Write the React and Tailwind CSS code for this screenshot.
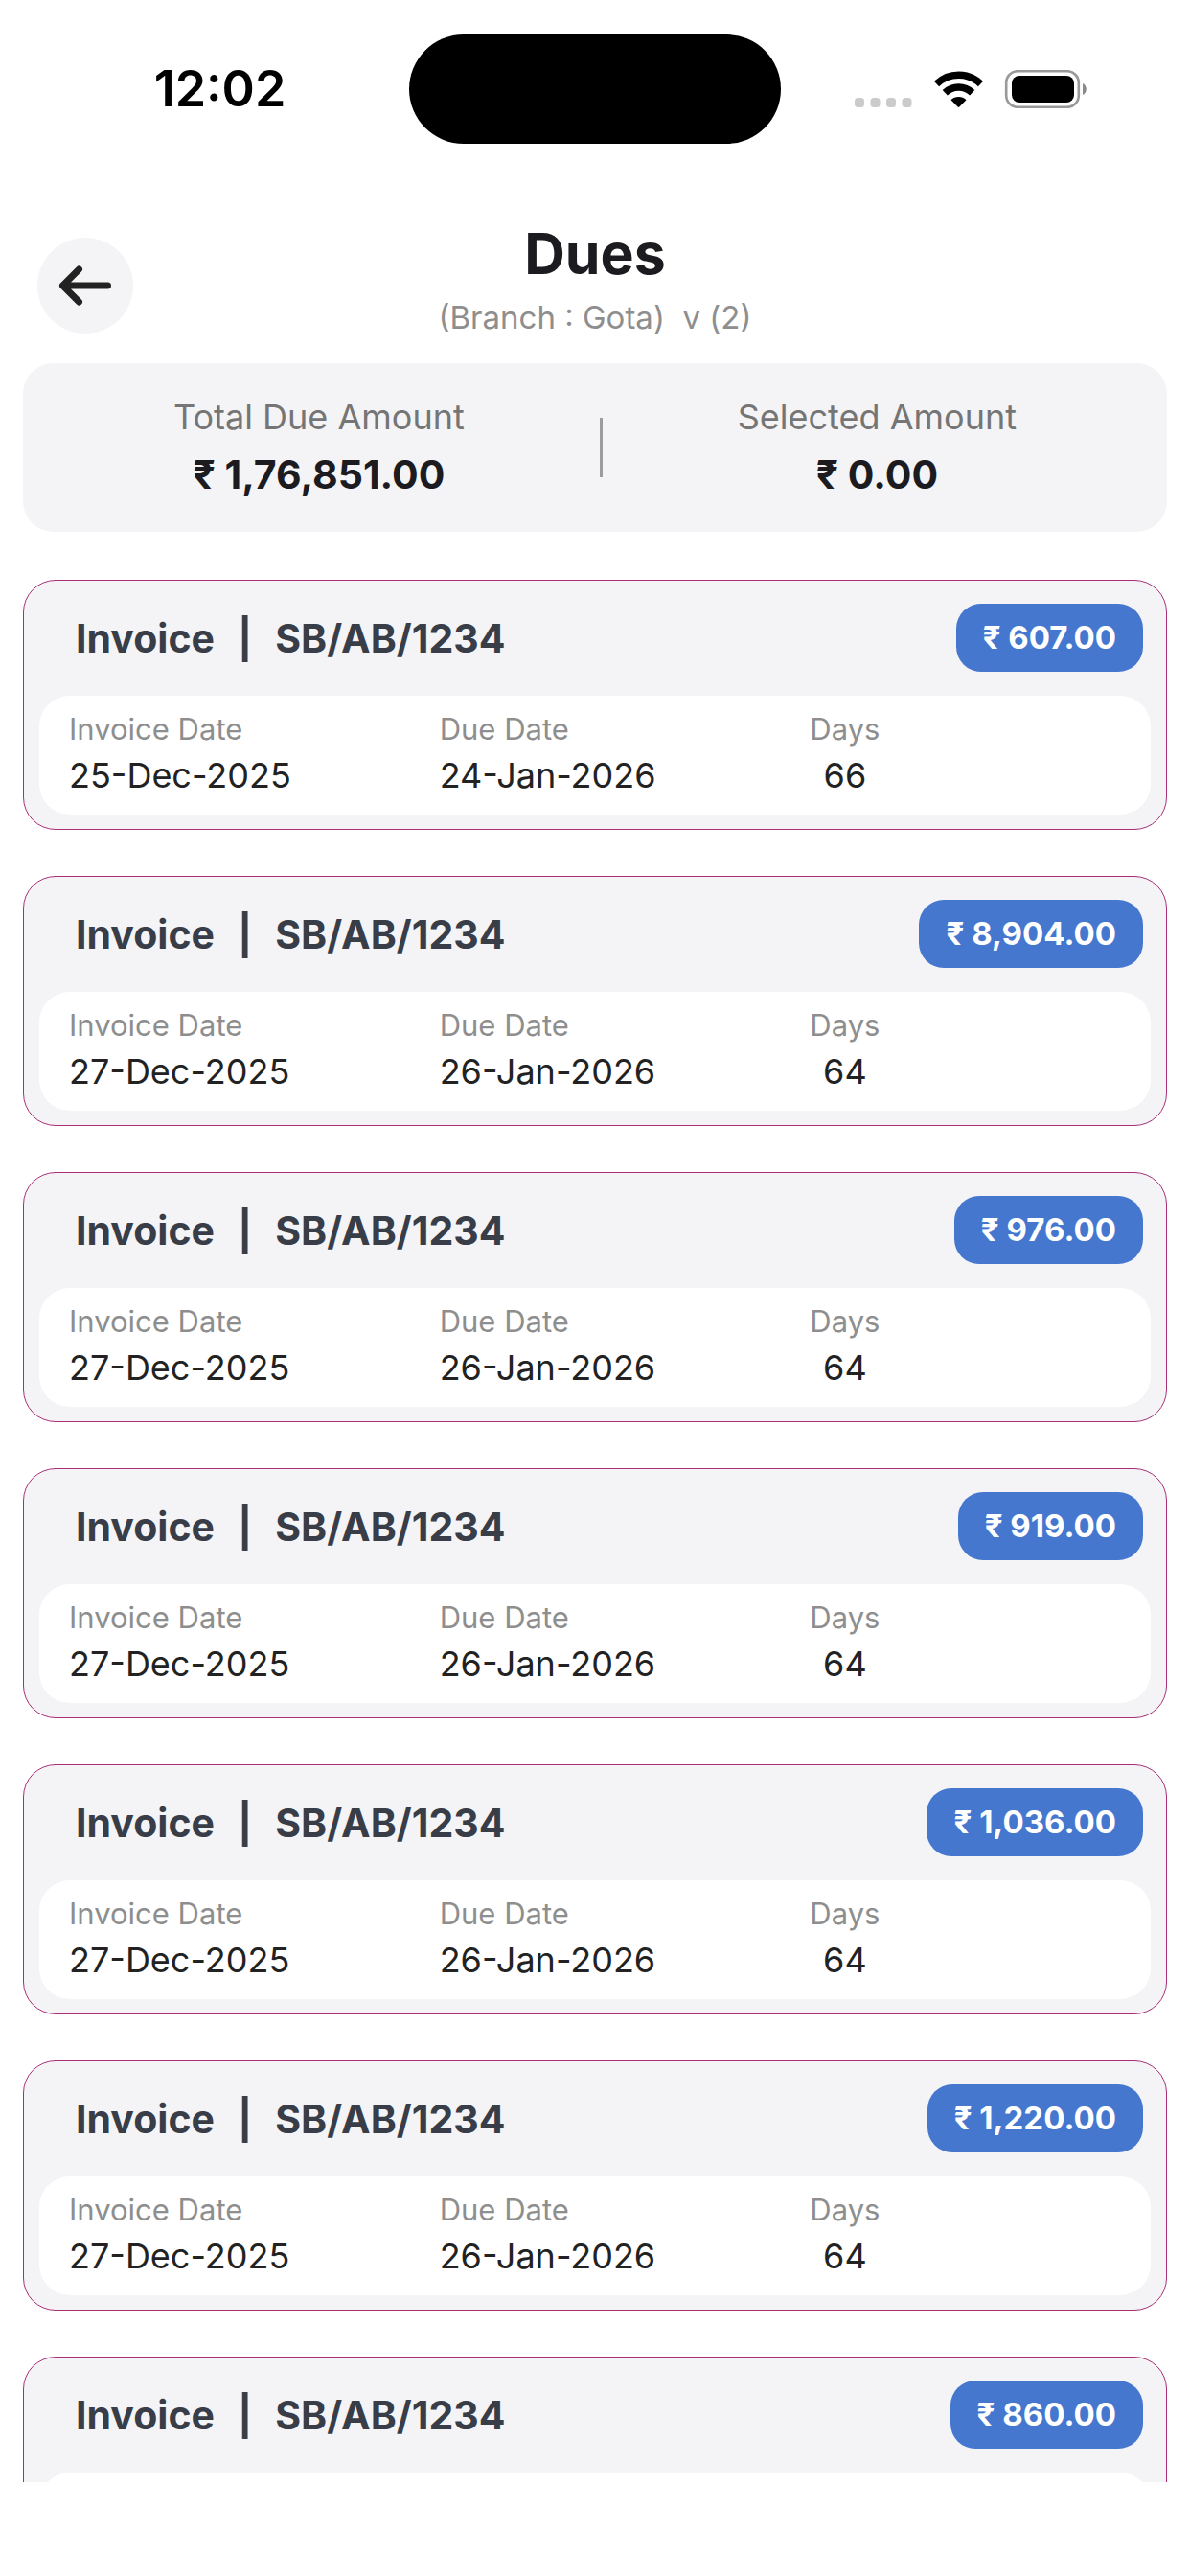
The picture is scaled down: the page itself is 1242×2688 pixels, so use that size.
import React from "react";

const invoices = [
  { id: 1, number: "SB/AB/1234", amount: "607.00", date: "25-Dec-2025", due: "24-Jan-2026", days: 66 },
  { id: 2, number: "SB/AB/1234", amount: "8,904.00", date: "27-Dec-2025", due: "26-Jan-2026", days: 64 },
  { id: 3, number: "SB/AB/1234", amount: "976.00", date: "27-Dec-2025", due: "26-Jan-2026", days: 64 },
  { id: 4, number: "SB/AB/1234", amount: "919.00", date: "27-Dec-2025", due: "26-Jan-2026", days: 64 },
  { id: 5, number: "SB/AB/1234", amount: "1,036.00", date: "27-Dec-2025", due: "26-Jan-2026", days: 64 },
  { id: 6, number: "SB/AB/1234", amount: "1,220.00", date: "27-Dec-2025", due: "26-Jan-2026", days: 64 },
  { id: 7, number: "SB/AB/1234", amount: "860.00", date: "27-Dec-2025", due: "26-Jan-2026", days: 64 },
];

const StatusBar = () => (
  <div className="grid h-[186px] shrink-0 grid-cols-[1fr_388px_1fr] items-center">
    <span className="pl-8 text-center text-[52px] leading-[66px] font-semibold text-black">
      12:02
    </span>
    <div className="h-[114px] rounded-full bg-black" />
    <div className="flex justify-center pr-8">
      <svg width="244" height="40" viewBox="0 0 244 40" aria-hidden="true">
        <g fill="#cbcbcb">
          <rect x="1" y="29" width="10" height="10" rx="3.5" />
          <rect x="17.5" y="29" width="10" height="10" rx="3.5" />
          <rect x="34" y="29" width="10" height="10" rx="3.5" />
          <rect x="50.5" y="29" width="10" height="10" rx="3.5" />
        </g>
        <g fill="none" stroke="#000" strokeWidth="7.5">
          <path d="M86.5 14.5a33 33 0 0 1 46 0" />
          <path d="M95.3 23.7a20.5 20.5 0 0 1 28.4 0" />
        </g>
        <path d="M101.5 31.2a11.5 11.5 0 0 1 16 0l-7.2 7.4a1.2 1.2 0 0 1-1.6 0z" fill="#000" />
        <rect x="159.2" y="1.2" width="75.6" height="37.6" rx="12" fill="none" stroke="#999" strokeWidth="2.6" />
        <rect x="165" y="6" width="65" height="28" rx="8" fill="#000" />
        <path d="M239 14c5 2 5 10 0 12z" fill="#8a8a8a" />
      </svg>
    </div>
  </div>
);

const Header = () => (
  <header className="grid shrink-0 grid-cols-[100px_1fr_100px] items-center px-[39px] pt-[46px] pb-[15px]">
    <button
      type="button"
      aria-label="Back"
      className="flex h-[100px] w-[100px] items-center justify-center rounded-full bg-[#f4f4f7]"
    >
      <svg width="60" height="48" viewBox="0 0 60 48" fill="none" stroke="#222" strokeWidth="7" strokeLinecap="round" strokeLinejoin="round">
        <path d="M53.5 24H6.5M23.5 7L6.5 24l17 17" />
      </svg>
    </button>
    <div className="text-center">
      <h1 className="text-[59px] leading-[66px] font-bold text-[#1c1b1f]">Dues</h1>
      <p className="text-[33px] leading-[66px] text-[#8e8e8e] whitespace-pre">
        {"(Branch : Gota)  v (2)"}
      </p>
    </div>
  </header>
);

const Total = ({ label, value }) => (
  <div className="flex-auto text-center">
    <p className="text-[36px] leading-[56px] text-[#757575]">{label}</p>
    <p className="text-[41px] leading-[64px] font-bold text-[#1c1b1f]">₹ {value}</p>
  </div>
);

const Field = ({ label, value }) => (
  <div className="pl-[31px]">
    <div className="w-fit text-center">
      <dt className="text-left text-[31px] leading-[46px] text-[#8e8e8e]">{label}</dt>
      <dd className="text-[36px] leading-[50px] text-[#222]">{value}</dd>
    </div>
  </div>
);

const InvoiceCard = ({ invoice }) => (
  <li className="rounded-[34px] border border-[#a82f77] bg-[#f4f4f7] px-4 pt-6 pb-[15px]">
    <div className="flex items-center justify-between pr-2 pl-[38px]">
      <h2 className="flex gap-6 text-[41px] leading-[64px] font-bold text-[#383d47]">
        <span>Invoice</span>
        <span>|</span>
        <span>{invoice.number}</span>
      </h2>
      <span className="rounded-[26px] bg-[#4577cf] px-7 text-[33px] leading-[71px] font-bold text-white">
        ₹ {invoice.amount}
      </span>
    </div>
    <dl className="mt-[25px] grid grid-cols-3 rounded-[32px] bg-white pt-3 pb-4">
      <Field label="Invoice Date" value={invoice.date} />
      <Field label="Due Date" value={invoice.due} />
      <Field label="Days" value={invoice.days} />
    </dl>
  </li>
);

const App = () => {
  return (
    <div className="flex h-screen flex-col bg-white pb-[98px] font-['Inter',sans-serif]">
      <StatusBar />
      <Header />

      <section className="mx-6 flex shrink-0 items-center rounded-[32px] bg-[#f4f4f7] px-4 py-7">
        <Total label="Total Due Amount" value="1,76,851.00" />
        <div className="h-[62px] w-[3px] bg-[#9c9c9f]" />
        <Total label="Selected Amount" value="0.00" />
      </section>

      <ul className="mt-[50px] flex min-h-0 flex-1 flex-col gap-12 overflow-y-auto px-6 [scrollbar-width:none] *:shrink-0">
        {invoices.map((invoice) => (
          <InvoiceCard key={invoice.id} invoice={invoice} />
        ))}
      </ul>
    </div>
  );
};

export default App;
